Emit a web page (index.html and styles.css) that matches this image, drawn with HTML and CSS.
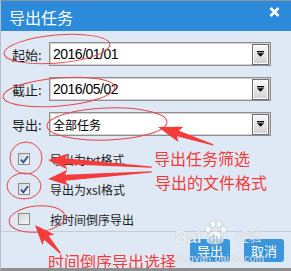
FILE: index.html
```html
<!DOCTYPE html>
<html lang="zh-CN">
<head>
  <meta charset="UTF-8" />
  <meta name="viewport" content="width=device-width, initial-scale=1.0" />
  <title>导出任务</title>
  <link rel="stylesheet" href="styles.css">
</head>
<body>
  <div class="dialog">
    <div class="titlebar">
      <span class="title">导出任务</span>
      <svg class="close" width="11" height="10" viewBox="0 0 11 10">
        <path d="M1.5 1 L9.5 9 M9.5 1 L1.5 9" stroke="#fff" stroke-width="2.6" />
      </svg>
    </div>

    <div class="form">
      <div class="field">
        <label class="field-label">起始:</label>
        <div class="select">
          <span class="select-text">2016/01/01</span>
          <span class="select-btn"><svg width="7" height="6" viewBox="0 0 7 6"><rect x="0" y="0" width="7" height="1.4" fill="#000"/><polygon points="0,2.2 7,2.2 3.5,5.8" fill="#000"/></svg></span>
        </div>
      </div>
      <div class="field">
        <label class="field-label">截止:</label>
        <div class="select">
          <span class="select-text">2016/05/02</span>
          <span class="select-btn"><svg width="7" height="6" viewBox="0 0 7 6"><rect x="0" y="0" width="7" height="1.4" fill="#000"/><polygon points="0,2.2 7,2.2 3.5,5.8" fill="#000"/></svg></span>
        </div>
      </div>
      <div class="field">
        <label class="field-label">导出:</label>
        <div class="select">
          <span class="select-text cjk">全部任务</span>
          <span class="select-btn"><svg width="7" height="6" viewBox="0 0 7 6"><rect x="0" y="0" width="7" height="1.4" fill="#000"/><polygon points="0,2.2 7,2.2 3.5,5.8" fill="#000"/></svg></span>
        </div>
      </div>

      <div class="checks">
        <label class="check"><span class="box"><svg width="9" height="9" viewBox="0 0 9 9"><path d="M1 4.6 L3.4 7.4 L8 1.2" stroke="#2c4c9c" stroke-width="1.8" fill="none"/></svg></span>导出为txt格式</label>
        <label class="check"><span class="box"><svg width="9" height="9" viewBox="0 0 9 9"><path d="M1 4.6 L3.4 7.4 L8 1.2" stroke="#2c4c9c" stroke-width="1.8" fill="none"/></svg></span>导出为xsl格式</label>
        <label class="check"><span class="box"></span>按时间倒序导出</label>
      </div>
    </div>

    <div class="footer">
      <button class="btn">导出</button>
      <button class="btn">取消</button>
    </div>

    <div class="overlay">
      <div class="watermark">
        <span class="wm-bai">Bai</span>
        <svg class="wm-paw" width="24" height="25" viewBox="0 0 24 25">
          <g fill="rgba(255,255,255,0.7)" stroke="rgba(150,160,170,0.45)" stroke-width="0.8">
            <ellipse cx="5" cy="9" rx="3" ry="3.6"/>
            <ellipse cx="10" cy="4" rx="3" ry="3.6"/>
            <ellipse cx="16" cy="4" rx="3" ry="3.6"/>
            <ellipse cx="20.5" cy="9.5" rx="3" ry="3.6"/>
            <path d="M4 22 C2 17 8 11 12 11 C17 11 23 17 20 22 C18 25 6 25 4 22 Z"/>
          </g>
        </svg>
        <span class="wm-du">du</span>
        <span class="wm-jy">经验</span>
        <span class="wm-url">jingyan.baidu.com</span>
      </div>

      <svg class="marks" width="291" height="271" viewBox="0 0 291 271">
        <g fill="none" stroke="#e8474d" stroke-width="1">
          <ellipse cx="57" cy="49" rx="53" ry="14" transform="rotate(-5 57 49)"/>
          <ellipse cx="59" cy="92" rx="56" ry="14" transform="rotate(-5 59 92)"/>
          <ellipse cx="107" cy="124" rx="60" ry="16" transform="rotate(-2 107 124)"/>
          <ellipse cx="26" cy="158" rx="16" ry="16"/>
          <ellipse cx="24" cy="186" rx="17" ry="13"/>
          <ellipse cx="37" cy="219" rx="28" ry="13" transform="rotate(-6 37 219)"/>
        </g>
        <g fill="#f43c3c">
          <polygon transform="translate(158 127) rotate(18)" points="0,0 24,-8 21,-3 58,-0.6 58,0.6 21,3 24,8"/>
          <polygon transform="translate(48 160) rotate(3.9)" points="0,0 20,-8 17,-3 104,-0.6 104,0.6 17,3 20,8"/>
          <polygon transform="translate(48 179) rotate(-3.9)" points="0,0 20,-8 17,-3 104,-0.6 104,0.6 17,3 20,8"/>
          <polygon transform="translate(35 225) rotate(48)" points="0,0 20,-8 17,-3 38,-0.6 38,0.6 17,3 20,8"/>
        </g>
      </svg>

      <div class="note note-filter">导出任务筛选</div>
      <div class="note note-format">导出的文件格式</div>
      <div class="note note-order">时间倒序导出选择</div>
    </div>
  </div>
</body>
</html>
```

FILE: styles.css
```css
* {
  box-sizing: border-box;
}
body {
  margin: 0;
  padding: 0;
  background: #9a9a9a;
  font-family: "Liberation Sans", "Noto Sans CJK SC", sans-serif;
  color: #1a1a1a;
}
.dialog {
  position: relative;
  width: 291px;
  height: 271px;
  display: flex;
  flex-direction: column;
  background: #dfe9f5;
  border-top: 1px solid #8d949c;
  border-left: 1px solid #b4bfcb;
  border-bottom: 3px solid #8f8f8f;
  overflow: hidden;
}
.titlebar {
  height: 30px;
  flex: none;
  display: flex;
  justify-content: space-between;
  align-items: flex-start;
  padding: 0 11px 0 8px;
  background: #2b8ad9;
}
.title {
  font-family: "Noto Sans CJK SC", sans-serif;
  font-size: 16px;
  line-height: 30px;
  padding-top: 1px;
  color: #fff;
}
.close {
  margin-top: 6px;
}
.form {
  padding: 11px 20px 0 11px;
}
.field {
  display: flex;
  align-items: center;
  height: 24px;
  margin-bottom: 11px;
}
.field:last-of-type {
  margin-bottom: 0;
}
.field-label {
  width: 37px;
  flex: none;
  font-family: "Noto Sans CJK SC", sans-serif;
  font-size: 13px;
  color: #1a1a1a;
}
.select {
  flex: 1;
  height: 24px;
  display: flex;
  align-items: center;
  padding: 0 1px 0 3px;
  background: #fff;
  border: 1px solid #8f8f8f;
  box-shadow: inset 0 0 0 1px #d2d2d2;
}
.select-text {
  font-size: 14px;
  letter-spacing: -0.5px;
  color: #000;
}
.select-text.cjk {
  font-family: "Noto Sans CJK SC", sans-serif;
  font-size: 12px;
  letter-spacing: 0;
}
.select-btn {
  margin-left: auto;
  width: 17px;
  height: 21px;
  display: flex;
  align-items: center;
  justify-content: center;
  border: 1px solid #6e6e6e;
  background: linear-gradient(#fafafa, #d0d0d0);
  box-shadow: inset 0 0 0 1px #fff;
}
.checks {
  display: flex;
  flex-direction: column;
  gap: 6px;
  margin-top: 10px;
}
.check {
  display: flex;
  align-items: center;
  height: 24px;
  padding-left: 6px;
  font-family: "Noto Sans CJK SC", sans-serif;
  font-size: 12px;
  color: #1e1e1e;
}
.box {
  width: 12px;
  height: 12px;
  margin-right: 20px;
  display: flex;
  align-items: center;
  justify-content: center;
  border: 1px solid #8a8a8a;
  background: linear-gradient(135deg, #d4d6d9, #f6f6f6);
}
.footer {
  flex: 1;
  display: flex;
  justify-content: flex-end;
  align-items: flex-start;
  gap: 14px;
  padding: 7px 7px 0 0;
  border-top: 1px solid #c4ccd6;
}
.btn {
  width: 40px;
  height: 23px;
  padding: 0;
  border: none;
  border-radius: 3px;
  background: #3a95da;
  color: #fff;
  font-family: "Noto Sans CJK SC", sans-serif;
  font-size: 13px;
}
.overlay {
  position: absolute;
  top: -1px;
  left: -1px;
  width: 291px;
  height: 271px;
  pointer-events: none;
}
.marks {
  position: absolute;
  top: 0;
  left: 0;
}
.note {
  position: absolute;
  font-family: "Noto Sans CJK SC", sans-serif;
  font-size: 16px;
  line-height: 14px;
  color: #f53a3a;
  white-space: nowrap;
}
.note-filter {
  top: 151px;
  left: 154px;
}
.note-format {
  top: 175px;
  left: 155px;
}
.note-order {
  top: 254px;
  left: 48px;
}
.watermark {
  position: absolute;
  top: 0;
  left: 0;
  width: 291px;
  height: 271px;
  color: rgba(255, 255, 255, 0.75);
  text-shadow: 0 0 1px rgba(120, 130, 140, 0.5);
}
.wm-bai {
  position: absolute;
  top: 228px;
  left: 175px;
  font-size: 17px;
  font-weight: bold;
}
.wm-paw {
  position: absolute;
  top: 220px;
  left: 203px;
}
.wm-du {
  position: absolute;
  top: 232px;
  left: 208px;
  font-size: 12px;
  font-weight: bold;
  color: rgba(170, 185, 200, 0.8);
  text-shadow: none;
}
.wm-jy {
  position: absolute;
  top: 228px;
  left: 236px;
  font-family: "Noto Sans CJK SC", sans-serif;
  font-size: 13px;
  line-height: 16px;
}
.wm-url {
  position: absolute;
  top: 253px;
  left: 177px;
  font-size: 10px;
  letter-spacing: 0.4px;
}
```
